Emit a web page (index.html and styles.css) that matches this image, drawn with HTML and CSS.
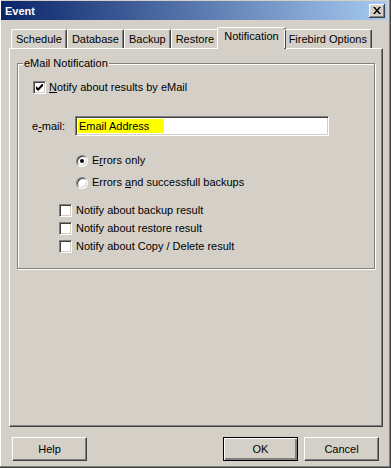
FILE: index.html
```html
<!DOCTYPE html>
<html lang="en">
<head>
    <meta charset="UTF-8">
    <title>Event</title>
    <link rel="stylesheet" href="styles.css">
</head>
<body>
    <div class="window">
        <div class="titlebar">
            <span class="title">Event</span>
            <button class="close-btn" aria-label="Close">
                <svg width="8" height="7" viewBox="0 0 8 7"><path d="M0 0h2l2 2.5L6 0h2L5 3.5 8 7H6L4 4.5 2 7H0l3-3.5z" fill="#000"/></svg>
            </button>
        </div>
        <div class="content">
            <div class="tabs">
                <div class="tab">Schedule</div>
                <div class="tab">Database</div>
                <div class="tab">Backup</div>
                <div class="tab">Restore</div>
                <div class="tab active">Notification</div>
                <div class="tab">Firebird Options</div>
            </div>
            <div class="panel">
                <div class="group">
                    <div class="group-title">eMail Notification</div>
                    <label class="check-row first">
                        <span class="checkbox checked">
                            <svg width="7" height="7" viewBox="0 0 7 7"><path d="M0 2v3l2 2 5-5V-1L2 4z" fill="#000"/></svg>
                        </span>
                        <span><u>N</u>otify about results by eMail</span>
                    </label>
                    <div class="email-row">
                        <span class="email-label">e<u>-</u>mail:</span>
                        <div class="edit"><span class="highlight">Email Address</span></div>
                    </div>
                    <label class="radio-row first">
                        <span class="radio checked"></span>
                        <span>E<u>r</u>rors only</span>
                    </label>
                    <label class="radio-row">
                        <span class="radio"></span>
                        <span>Errors <u>a</u>nd successfull backups</span>
                    </label>
                    <label class="check-row sub first-sub">
                        <span class="checkbox"></span>
                        <span>Notify about backup result</span>
                    </label>
                    <label class="check-row sub">
                        <span class="checkbox"></span>
                        <span>Notify about restore result</span>
                    </label>
                    <label class="check-row sub">
                        <span class="checkbox"></span>
                        <span>Notify about Copy / Delete result</span>
                    </label>
                </div>
            </div>
            <div class="buttons">
                <button class="btn">Help</button>
                <div class="spacer"></div>
                <button class="btn default">OK</button>
                <button class="btn">Cancel</button>
            </div>
        </div>
    </div>
</body>
</html>
```

FILE: styles.css
```css
* {
    box-sizing: border-box;
}
body {
    margin: 0;
    background-color: #d4d0c8;
    font-family: 'Liberation Sans', Arial, sans-serif;
    font-size: 11px;
    color: #000;
}
.window {
    width: 391px;
    height: 468px;
    display: flex;
    flex-direction: column;
    background-color: #d4d0c8;
    padding: 1px 3px 3px 1px;
    border-right: 1px solid #404040;
    border-bottom: 1px solid #404040;
    box-shadow: inset -1px -1px 0 #808080, inset 1px 0 0 #ffffff;
}
.titlebar {
    height: 19px;
    display: flex;
    align-items: center;
    justify-content: space-between;
    padding: 0 2px 0 4px;
    background: linear-gradient(to right, #0a246a, #a6caf0);
}
.title {
    color: #fff;
    font-weight: bold;
    font-size: 11px;
}
.close-btn {
    width: 16px;
    height: 14px;
    padding: 0;
    display: flex;
    align-items: center;
    justify-content: center;
    background-color: #d4d0c8;
    border: none;
    box-shadow: inset -1px -1px 0 #404040, inset 1px 1px 0 #ffffff, inset -2px -2px 0 #808080;
}
.content {
    flex: 1;
    display: flex;
    flex-direction: column;
    padding: 7px 4px 0 8px;
}
.tabs {
    display: flex;
    align-items: flex-end;
    height: 21px;
    margin-left: 2px;
    position: relative;
    z-index: 1;
}
.tab {
    height: 19px;
    padding: 3px 4px 0 4px;
    border-left: 1px solid #fff;
    border-top: 1px solid #fff;
    border-right: 1px solid #404040;
    border-top-left-radius: 2px;
    border-top-right-radius: 2px;
    box-shadow: inset -1px 0 0 #808080;
    white-space: nowrap;
}
.tab.active {
    height: 22px;
    margin: 0 -2px -1px -2px;
    padding: 2px 6px 0 6px;
    background-color: #d4d0c8;
}
.panel {
    flex: 1;
    border-top: 1px solid #fff;
    border-left: 1px solid #fff;
    border-right: 1px solid #404040;
    border-bottom: 1px solid #404040;
    box-shadow: inset -1px -1px 0 #808080;
    padding: 14px 7px 0 7px;
}
.group {
    border: 1px solid #808080;
    box-shadow: 1px 1px 0 #fff, inset 1px 1px 0 #fff;
    padding: 0 0 15px 0;
}
.group-title {
    display: table;
    margin: -7px 0 0 5px;
    padding: 0 1px;
    line-height: 13px;
    background-color: #d4d0c8;
}
label {
    display: flex;
    align-items: center;
    height: 13px;
    line-height: 13px;
}
.check-row {
    gap: 3px;
    padding-left: 15px;
}
.check-row.first {
    margin-top: 11px;
}
.check-row.sub {
    gap: 4px;
    padding-left: 41px;
    margin-top: 5px;
}
.check-row.sub.first-sub {
    margin-top: 15px;
}
.checkbox {
    width: 13px;
    height: 13px;
    flex: none;
    display: flex;
    align-items: center;
    justify-content: center;
    background-color: #fff;
    border-top: 1px solid #808080;
    border-left: 1px solid #808080;
    border-right: 1px solid #fff;
    border-bottom: 1px solid #fff;
    box-shadow: inset 1px 1px 0 #404040, inset -1px -1px 0 #d4d0c8;
}
.email-row {
    display: flex;
    align-items: center;
    margin-top: 22px;
    padding-left: 14px;
}
.email-label {
    width: 43px;
}
.edit {
    width: 254px;
    height: 20px;
    padding: 2px;
    background-color: #fff;
    border-top: 1px solid #808080;
    border-left: 1px solid #808080;
    border-right: 1px solid #fff;
    border-bottom: 1px solid #fff;
    box-shadow: inset 1px 1px 0 #404040, inset -1px -1px 0 #d4d0c8;
}
.highlight {
    display: block;
    width: 86px;
    height: 14px;
    line-height: 14px;
    padding-left: 1px;
    background-color: #ffff00;
}
.radio-row {
    gap: 4px;
    padding-left: 58px;
    margin-top: 9px;
}
.radio-row.first {
    margin-top: 18px;
}
.radio {
    width: 12px;
    height: 12px;
    flex: none;
    border-radius: 50%;
    background-color: #fff;
    border: 1px solid;
    border-color: #808080 #fff #fff #808080;
    box-shadow: inset 1px 1px 0 #404040, inset -1px -1px 0 #d4d0c8;
    display: flex;
    align-items: center;
    justify-content: center;
}
.radio.checked::after {
    content: '';
    width: 4px;
    height: 4px;
    border-radius: 50%;
    background-color: #000;
}
.buttons {
    display: flex;
    gap: 6px;
    margin: 10px 4px 3px 3px;
}
.spacer {
    flex: 1;
}
.btn {
    width: 75px;
    height: 24px;
    font-family: inherit;
    font-size: 11px;
    color: #000;
    background-color: #d4d0c8;
    border-top: 1px solid #fff;
    border-left: 1px solid #fff;
    border-right: 1px solid #404040;
    border-bottom: 1px solid #404040;
    box-shadow: inset -1px -1px 0 #808080;
    padding: 0;
}
.btn.default {
    border: 1px solid #000;
    box-shadow: inset 1px 1px 0 #fff, inset -2px -2px 0 #808080, inset -1px -1px 0 #404040;
}
```
